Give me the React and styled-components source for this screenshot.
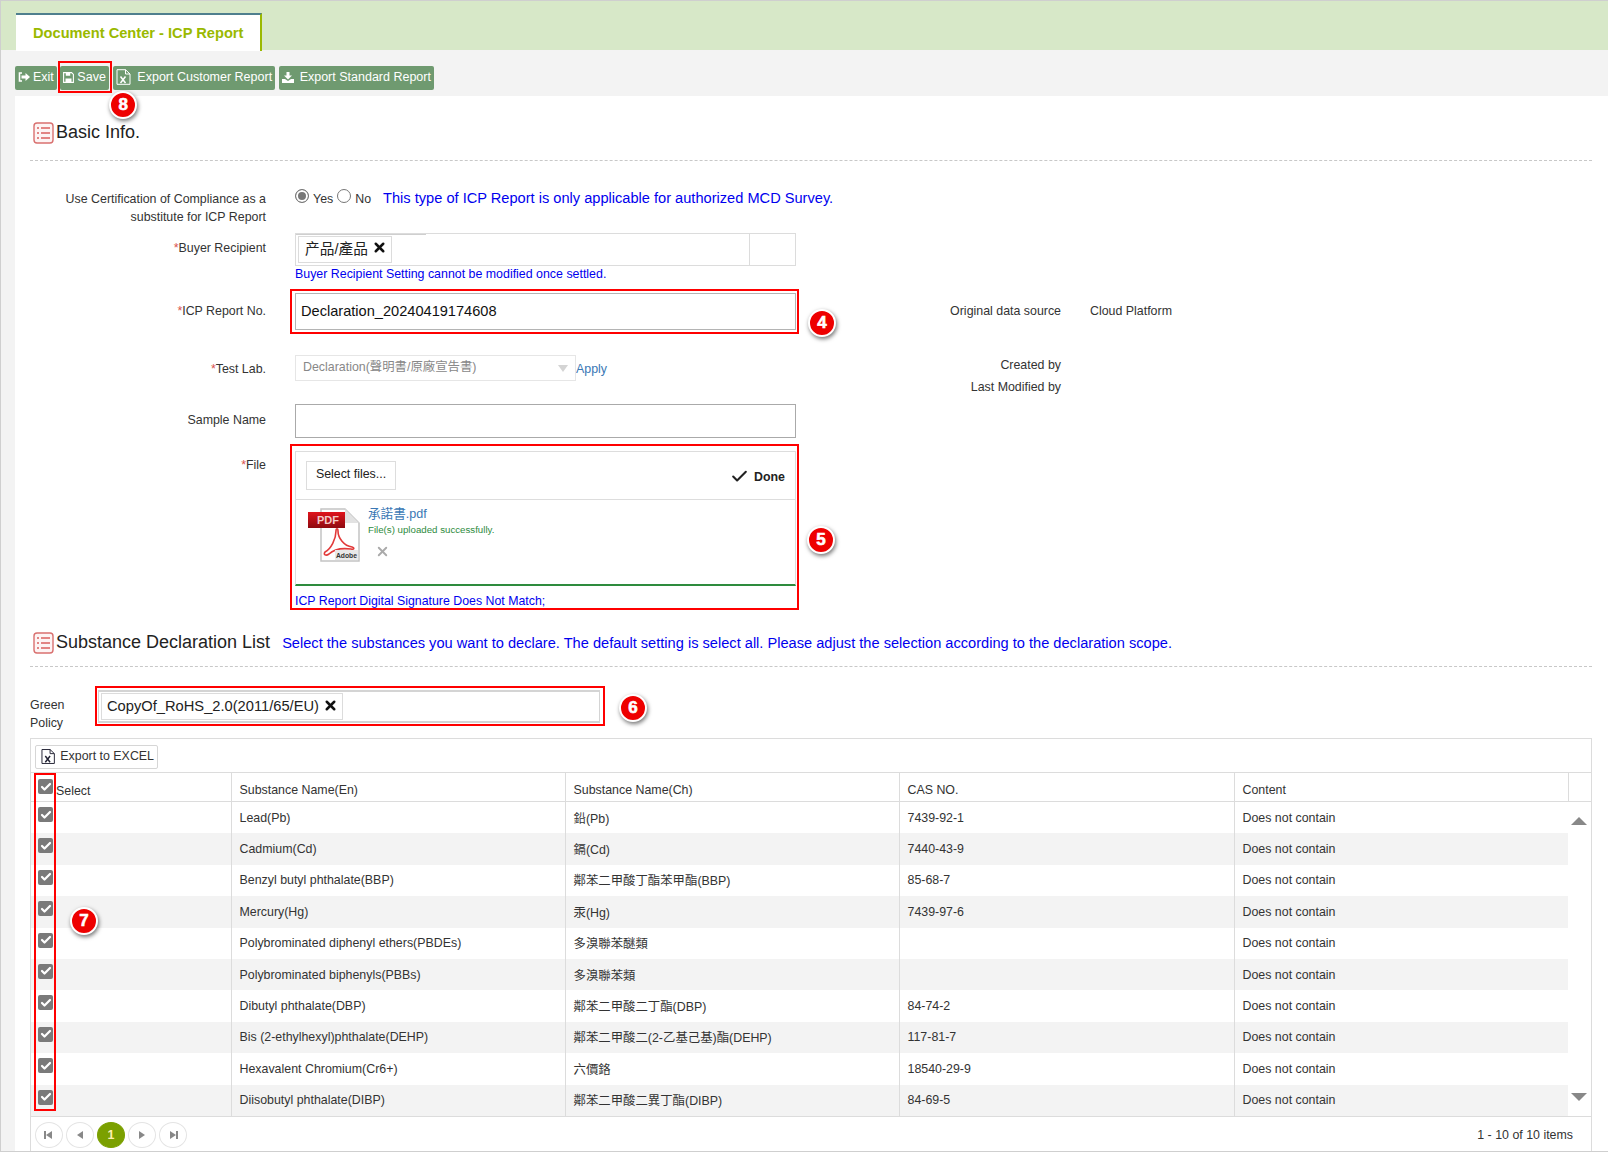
import React from "react";
import styled, { createGlobalStyle } from "styled-components";
import { Check, X } from "lucide-react";

const GlobalStyle = createGlobalStyle`
  html, body {
    margin: 0;
    padding: 0;
    background: #fff;
  }
  * {
    box-sizing: border-box;
  }
`;

const substances = [
  ["Lead(Pb)", "鉛(Pb)", "7439-92-1"],
  ["Cadmium(Cd)", "鎘(Cd)", "7440-43-9"],
  ["Benzyl butyl phthalate(BBP)", "鄰苯二甲酸丁酯苯甲酯(BBP)", "85-68-7"],
  ["Mercury(Hg)", "汞(Hg)", "7439-97-6"],
  ["Polybrominated diphenyl ethers(PBDEs)", "多溴聯苯醚類", ""],
  ["Polybrominated biphenyls(PBBs)", "多溴聯苯類", ""],
  ["Dibutyl phthalate(DBP)", "鄰苯二甲酸二丁酯(DBP)", "84-74-2"],
  ["Bis (2-ethylhexyl)phthalate(DEHP)", "鄰苯二甲酸二(2-乙基己基)酯(DEHP)", "117-81-7"],
  ["Hexavalent Chromium(Cr6+)", "六價鉻", "18540-29-9"],
  ["Diisobutyl phthalate(DIBP)", "鄰苯二甲酸二異丁酯(DIBP)", "84-69-5"],
];

function Badge({ n, $left, $top }) {
  return (
    <BadgeDot $left={$left} $top={$top}>
      {n}
    </BadgeDot>
  );
}

function ListIcon() {
  return (
    <SectionIcon viewBox="0 0 21 22">
      <rect x="1" y="1" width="19" height="20" rx="3" fill="#fdf4f4" stroke="#d9706f" strokeWidth="1.4" />
      <path d="M8 6h9M8 11h9M8 16h9M4 6h2M4 11h2M4 16h2" stroke="#d9605f" strokeWidth="1.6" fill="none" />
    </SectionIcon>
  );
}

function ExcelIcon({ color = "#fff", size = 16 }) {
  return (
    <svg width={size - 1} height={size} viewBox="0 0 15 16">
      <path d="M1 .7h8.5L14 5v10.3H1z" fill="none" stroke={color} strokeWidth="1" />
      <path d="M9.5.7V5H14" fill="none" stroke={color} strokeWidth="1" />
      <path d="M4.5 7.5l5 6.5M9.5 7.5l-5 6.5" stroke={color} strokeWidth="1.5" />
    </svg>
  );
}

function ExitIcon() {
  return (
    <svg width="12" height="10" viewBox="0 0 12 10">
      <path d="M4 1H1.5v8H4" fill="none" stroke="#fff" strokeWidth="1.6" />
      <path d="M3.5 3.5h4V1L12 5 7.5 9V6.5h-4z" fill="#fff" />
    </svg>
  );
}

function SaveIcon() {
  return (
    <svg width="11" height="11" viewBox="0 0 11 11">
      <path d="M.6.6h8l1.8 1.8v8H.6z" fill="none" stroke="#fff" strokeWidth="1.1" />
      <path d="M2.8.8h4.4v3H2.8zM2.5 6.5h6v3.8h-6z" fill="#fff" />
    </svg>
  );
}

function DownloadIcon() {
  return (
    <svg width="12" height="11" viewBox="0 0 12 11">
      <path d="M4.5 0h3v3.5H10L6 7.5 2 3.5h2.5z" fill="#fff" />
      <path d="M0 7h3l3 2 3-2h3v4H0z" fill="#fff" />
    </svg>
  );
}

function PdfIcon() {
  return (
    <svg width="54" height="55" viewBox="0 0 54 55">
      <defs>
        <linearGradient id="pdfBanner" x1="0" y1="0" x2="0" y2="1">
          <stop offset="0" stopColor="#e0141c" />
          <stop offset="1" stopColor="#8e0a10" />
        </linearGradient>
      </defs>
      <path d="M13 1h24l14 14v38H13z" fill="#fff" stroke="#c4c4c4" strokeWidth="1.5" />
      <path d="M37 1v14h14z" fill="#e2e2e2" />
      <rect x="0" y="4" width="37" height="16" fill="url(#pdfBanner)" />
      <text x="9" y="16" fontFamily="Liberation Sans, sans-serif" fontSize="11" fontWeight="700" fill="#f4c9c9">
        PDF
      </text>
      <path
        d="M17 44c6-3 11-13 11-21 0-3 2-3 2 0 0 7 6 15 14 16 3 1 2 3-1 2-8-1-17 0-22 5-3 2-6 1-4-2z"
        fill="none"
        stroke="#e23a3a"
        strokeWidth="1.6"
      />
      <rect x="27" y="42" width="23" height="10" fill="#e9e9e9" />
      <text x="28" y="50" fontFamily="Liberation Sans, sans-serif" fontSize="8" fontWeight="700" fill="#333" textLength="21" lengthAdjust="spacingAndGlyphs">
        Adobe
      </text>
    </svg>
  );
}

function Tick() {
  return (
    <CheckBox>
      <Check size={12} strokeWidth={4.5} color="#fff" />
    </CheckBox>
  );
}

function PageArrow({ dir, edge }) {
  const flip = dir === "left" ? "scale(-1,1) translate(-12,0)" : undefined;
  return (
    <svg width="12" height="12" viewBox="0 0 12 12">
      <g transform={flip}>
        <path d="M3 2l6 4-6 4z" fill="#888" />
        {edge && <rect x="9" y="2" width="2" height="8" fill="#888" />}
      </g>
    </svg>
  );
}

function App() {
  return (
    <Page>
      <GlobalStyle />
      <TabBar>
        <Tab>Document Center - ICP Report</Tab>
      </TabBar>
      <Toolbar>
        <ToolButton $gap="3px">
          <ExitIcon /> Exit
        </ToolButton>
        <Marked $inset="-5px -3px -3px -2px">
          <ToolButton $gap="3px">
            <SaveIcon /> Save
          </ToolButton>
          <Badge n="8" $left="49px" $top="25px" />
        </Marked>
        <ToolButton $gap="6px" $ml="1px">
          <ExcelIcon /> Export Customer Report
        </ToolButton>
        <ToolButton $gap="6px">
          <DownloadIcon /> Export Standard Report
        </ToolButton>
      </Toolbar>
      <Content>
        <SectionHead $height="65px" $pad="26px">
          <ListIcon />
          <SectionTitle>Basic Info.</SectionTitle>
        </SectionHead>

        <FormRow $mt="29px" $height="35px">
          <FieldLabel>
            Use Certification of Compliance as a
            <br />
            substitute for ICP Report
          </FieldLabel>
          <RadioLine>
            <Radio $checked />
            <RadioText>Yes</RadioText>
            <Radio />
            <RadioText>No</RadioText>
            <BlueHint>This type of ICP Report is only applicable for authorized MCD Survey.</BlueHint>
          </RadioLine>
        </FormRow>

        <FormRow $mt="8px" $height="33px">
          <FieldLabel $pt="6px">
            <Star>*</Star>Buyer Recipient
          </FieldLabel>
          <BuyerBox>
            <MultiSelect>
              <Chip $lift="5px">
                产品/產品 <X size={15} strokeWidth={4} color="#111" />
              </Chip>
            </MultiSelect>
            <BuyerEnd />
          </BuyerBox>
        </FormRow>
        <FormRow $height="15px">
          <span />
          <SmallNote $mt="1px">Buyer Recipient Setting cannot be modified once settled.</SmallNote>
        </FormRow>

        <FormRow $mt="12px" $height="37px">
          <FieldLabel $pt="9px">
            <Star>*</Star>ICP Report No.
          </FieldLabel>
          <Marked $inset="-4px -3px -4px -5px">
            <TextInput>Declaration_20240419174608</TextInput>
            <Badge n="4" $left="513px" $top="16px" />
          </Marked>
          <FieldLabel $pt="9px">Original data source</FieldLabel>
          <InfoValue>Cloud Platform</InfoValue>
        </FormRow>

        <FormRow $mt="25px" $height="24px">
          <FieldLabel $pt="5px">
            <Star>*</Star>Test Lab.
          </FieldLabel>
          <SelectLine>
            <DisabledSelect>
              Declaration(聲明書/原廠宣告書)
              <SelectArrow />
            </DisabledSelect>
            <ApplyLink>Apply</ApplyLink>
          </SelectLine>
          <InfoStack>
            Created by
            <br />
            Last Modified by
          </InfoStack>
        </FormRow>

        <FormRow $mt="25px" $height="34px">
          <FieldLabel $pt="7px">Sample Name</FieldLabel>
          <EmptyInput />
        </FormRow>

        <FormRow $mt="13px" $height="157px">
          <FieldLabel $pt="5px">
            <Star>*</Star>File
          </FieldLabel>
          <Marked $inset="-7px -3px -2px -5px">
            <UploadBox>
              <UploadHead>
                <SelectFiles>Select files...</SelectFiles>
                <DoneMark>
                  <Check size={19} strokeWidth={2.6} color="#222" /> Done
                </DoneMark>
              </UploadHead>
              <UploadFile>
                <PdfIcon />
                <FileMeta>
                  <FileName>承諾書.pdf</FileName>
                  <FileOk>File(s) uploaded successfully.</FileOk>
                  <FileRemove>
                    <X size={15} strokeWidth={3} color="#aaa" />
                  </FileRemove>
                </FileMeta>
              </UploadFile>
            </UploadBox>
            <SignatureNote>ICP Report Digital Signature Does Not Match;</SignatureNote>
            <Badge n="5" $left="512px" $top="75px" />
          </Marked>
        </FormRow>

        <SectionHead $height="60px" $pad="25px" $mt="-1px">
          <ListIcon />
          <SectionTitle>Substance Declaration List</SectionTitle>
          <BlueHint $ml="10px">
            Select the substances you want to declare. The default setting is select all. Please adjust the selection
            according to the declaration scope.
          </BlueHint>
        </SectionHead>

        <PolicyRow>
          <PolicyLabel>
            Green
            <br />
            Policy
          </PolicyLabel>
          <Marked $inset="-4px -5px -3px -3px">
            <PolicyBox>
              <Chip $pad="0 4px 0 5px" $lift="2px">
                CopyOf_RoHS_2.0(2011/65/EU) <X size={15} strokeWidth={4} color="#111" />
              </Chip>
            </PolicyBox>
            <Badge n="6" $left="521px" $top="4px" />
          </Marked>
        </PolicyRow>

        <Grid>
          <GridToolbar>
            <ExportButton>
              <ExcelIcon color="#223" size={17} /> Export to EXCEL
            </ExportButton>
          </GridToolbar>
          <HeadRow>
            <HeadCell $select>
              <Tick />
              <SelectWord>Select</SelectWord>
            </HeadCell>
            <HeadCell>Substance Name(En)</HeadCell>
            <HeadCell>Substance Name(Ch)</HeadCell>
            <HeadCell>CAS NO.</HeadCell>
            <HeadCell>Content</HeadCell>
            <span />
          </HeadRow>
          <GridBody>
            <Rows>
              {substances.map((s) => (
                <Row key={s[0]}>
                  <TickCell>
                    <Tick />
                  </TickCell>
                  <Cell>{s[0]}</Cell>
                  <Cell>{s[1]}</Cell>
                  <Cell>{s[2]}</Cell>
                  <Cell $line>Does not contain</Cell>
                </Row>
              ))}
              <SelectFrame />
              <Badge n="7" $left="39px" $top="105px" />
            </Rows>
            <ScrollArrows>
              <ArrowUp />
              <ArrowDown />
            </ScrollArrows>
          </GridBody>
          <Pager>
            <PagerButtons>
              <PageCircle>
                <PageArrow dir="left" edge />
              </PageCircle>
              <PageCircle>
                <PageArrow dir="left" />
              </PageCircle>
              <PageCurrent>1</PageCurrent>
              <PageCircle>
                <PageArrow dir="right" />
              </PageCircle>
              <PageCircle>
                <PageArrow dir="right" edge />
              </PageCircle>
            </PagerButtons>
            <PagerInfo>1 - 10 of 10 items</PagerInfo>
          </Pager>
        </Grid>
      </Content>
    </Page>
  );
}

const Page = styled.div`
  width: 1608px;
  height: 1152px;
  overflow: hidden;
  display: flex;
  flex-direction: column;
  background: #f3f3f3;
  border-top: 1px solid #cfcfcf;
  border-left: 1px solid #cfcfcf;
  border-bottom: 1px solid #cfcfcf;
  font-family: "Liberation Sans", "Noto Sans CJK TC", sans-serif;
  font-size: 12.4px;
  color: #333;
`;

const TabBar = styled.div`
  flex: none;
  height: 49px;
  padding: 12px 0 0 15px;
  background: #d7e8c8;
`;

const Tab = styled.div`
  width: 246px;
  height: 38px;
  margin-bottom: -1px;
  padding: 10px 0 0 17px;
  background: #fff;
  border-top: 2px solid #4f7f8e;
  border-right: 2px solid #9ab900;
  color: #9ab900;
  font-size: 14.65px;
  font-weight: 700;
`;

const Toolbar = styled.div`
  flex: none;
  height: 46px;
  padding: 16px 0 0 14px;
  display: flex;
  align-items: flex-start;
  gap: 3.5px;
`;

const ToolButton = styled.div`
  height: 24px;
  margin-left: ${(p) => p.$ml || 0};
  padding: 0 3px 2px;
  display: flex;
  align-items: center;
  gap: ${(p) => p.$gap};
  background: #6f9a70;
  border-radius: 2px;
  color: #fff;
  font-size: 12.5px;
  white-space: nowrap;
`;

const Marked = styled.div`
  position: relative;
  &::after {
    content: "";
    position: absolute;
    inset: ${(p) => p.$inset};
    border: 2px solid #f00;
    pointer-events: none;
  }
`;

const BadgeDot = styled.div`
  position: absolute;
  left: ${(p) => p.$left};
  top: ${(p) => p.$top};
  z-index: 2;
  width: 28px;
  height: 28px;
  display: flex;
  align-items: center;
  justify-content: center;
  border: 2px solid #fff;
  border-radius: 50%;
  background: #ee0000;
  box-shadow: 1px 2px 4px rgba(0, 0, 0, 0.55);
  color: #fff;
  font-size: 17px;
  font-weight: 700;
  -webkit-text-stroke: 0.6px #fff;
`;

const Content = styled.div`
  flex: 1;
  margin-left: 14px;
  padding: 0 16px 0 15px;
  background: #fff;
`;

const SectionHead = styled.div`
  height: ${(p) => p.$height};
  margin-top: ${(p) => p.$mt || 0};
  padding: ${(p) => p.$pad} 0 0 3px;
  display: flex;
  align-items: flex-start;
  gap: 2px;
  border-bottom: 1px dashed #c8c8c8;
`;

const SectionIcon = styled.svg`
  flex: none;
  width: 21px;
  height: 22px;
`;

const SectionTitle = styled.div`
  font-size: 18px;
  line-height: 20px;
  color: #222;
`;

const FormRow = styled.div`
  height: ${(p) => p.$height};
  margin-top: ${(p) => p.$mt || 0};
  display: grid;
  grid-template-columns: 236px 501px 236px 1fr;
  column-gap: 29px;
  align-items: start;
`;

const FieldLabel = styled.div`
  padding-top: ${(p) => p.$pt || 0};
  text-align: right;
  line-height: 18px;
`;

const Star = styled.span`
  color: #d9534f;
`;

const RadioLine = styled.div`
  grid-column: 2 / 5;
  display: flex;
  align-items: flex-start;
  white-space: nowrap;
`;

const Radio = styled.span`
  flex: none;
  width: 14px;
  height: 14px;
  margin-top: -1px;
  border: 1px solid #777;
  border-radius: 50%;
  background: ${(p) => (p.$checked ? "#777" : "#fff")};
  box-shadow: inset 0 0 0 2px #fff;
`;

const RadioText = styled.span`
  margin: 2px 4px 0 4px;
  line-height: 14px;
`;

const BlueHint = styled.span`
  margin-left: ${(p) => p.$ml || "8px"};
  margin-top: ${(p) => (p.$ml ? "2px" : "-1px")};
  color: #0000ee;
  font-size: 14.62px;
  line-height: 18px;
  white-space: nowrap;
`;

const BuyerBox = styled.div`
  height: 33px;
  display: flex;
`;

const MultiSelect = styled.div`
  position: relative;
  flex: 1;
  padding: 2px;
  border: 1px solid #dcdcdc;
  &::before {
    content: "";
    position: absolute;
    left: 0;
    top: 0;
    width: 130px;
    height: 1px;
    background: #cfcfcf;
  }
`;

const BuyerEnd = styled.div`
  flex: none;
  width: 46px;
  border: 1px solid #dcdcdc;
  border-left: 0;
`;

const Chip = styled.div`
  height: 27px;
  width: fit-content;
  padding: ${(p) => p.$pad || "0 4px 0 6px"};
  padding-bottom: ${(p) => p.$lift};
  display: flex;
  align-items: center;
  gap: 4px;
  border: 1px solid #dcdcdc;
  color: #222;
  font-size: 14.7px;
  white-space: nowrap;
`;

const SmallNote = styled.div`
  margin-top: ${(p) => p.$mt || 0};
  color: #0000ee;
  font-size: 12.4px;
  line-height: 15px;
`;

const TextInput = styled.div`
  height: 37px;
  padding: 0 5px 2px;
  display: flex;
  align-items: center;
  border: 1px solid #b4b4b4;
  color: #111;
  font-size: 14.6px;
`;

const InfoValue = styled.div`
  padding-top: 9px;
  line-height: 18px;
`;

const InfoStack = styled.div`
  grid-column: 3;
  margin-top: -1px;
  text-align: right;
  line-height: 22px;
`;

const SelectLine = styled.div`
  display: flex;
  align-items: flex-start;
`;

const DisabledSelect = styled.div`
  position: relative;
  width: 281px;
  height: 26px;
  padding: 1px 7px;
  border: 1px solid #e6e6e6;
  color: #888;
`;

const SelectArrow = styled.span`
  position: absolute;
  right: 7px;
  top: 9px;
  border-left: 5px solid transparent;
  border-right: 5px solid transparent;
  border-top: 7px solid #d4d4d4;
`;

const ApplyLink = styled.span`
  padding-top: 7px;
  color: #3a78b5;
`;

const EmptyInput = styled.div`
  height: 34px;
  border: 1px solid #aaa;
`;

const UploadBox = styled.div`
  height: 135px;
  border: 1px solid #ddd;
  border-bottom: 2px solid #2e8b3d;
`;

const UploadHead = styled.div`
  height: 48px;
  padding: 9px 10px 0 10px;
  display: flex;
  justify-content: space-between;
  border-bottom: 1px solid #ddd;
`;

const SelectFiles = styled.div`
  width: 90px;
  height: 29px;
  padding-bottom: 3px;
  display: flex;
  align-items: center;
  justify-content: center;
  border: 1px solid #ddd;
  color: #222;
`;

const DoneMark = styled.div`
  display: flex;
  align-items: center;
  gap: 5px;
  height: 29px;
  margin-top: 1px;
  font-weight: 700;
  color: #222;
`;

const UploadFile = styled.div`
  padding: 8px 0 0 12px;
  display: flex;
  gap: 6px;
`;

const FileMeta = styled.div`
  display: flex;
  flex-direction: column;
  align-items: flex-start;
`;

const FileName = styled.div`
  margin-top: -1px;
  color: #3a78b5;
  font-size: 12.6px;
  line-height: 15px;
`;

const FileOk = styled.div`
  margin-top: 1px;
  color: #2e8b3d;
  font-size: 9.7px;
  line-height: 13px;
`;

const FileRemove = styled.div`
  margin: 8px 0 0 7px;
  line-height: 0;
`;

const SignatureNote = styled.div`
  margin-top: 8px;
  color: #0000ee;
  font-size: 12.35px;
  line-height: 14px;
`;

const PolicyRow = styled.div`
  margin-top: 23px;
  height: 48px;
  display: grid;
  grid-template-columns: 68px 502px;
  align-items: start;
`;

const PolicyLabel = styled.div`
  padding-top: 6px;
  line-height: 18px;
`;

const PolicyBox = styled.div`
  height: 33px;
  padding: 1px 2px;
  border: 1px solid #d4d4d4;
  border-top-width: 2px;
  border-bottom-width: 2px;
`;

const Grid = styled.div`
  height: 413px;
  border: 1px solid #dcdcdc;
  border-bottom: 0;
`;

const GridToolbar = styled.div`
  height: 33px;
  padding: 6px 0 0 4px;
`;

const ExportButton = styled.div`
  width: 123px;
  height: 24px;
  padding: 0 3px 2px 5px;
  display: flex;
  align-items: center;
  gap: 5px;
  border: 1px solid #d6d6d6;
  border-radius: 2px;
  white-space: nowrap;
`;

const HeadRow = styled.div`
  height: 30px;
  display: grid;
  grid-template-columns: 200.5px 334px 334px 335px 334px 1fr;
  border-top: 1px solid #dcdcdc;
  border-bottom: 1px solid #dcdcdc;
`;

const HeadCell = styled.div`
  position: relative;
  padding: ${(p) => (p.$select ? "6px 0 0 7px" : "8px 0 0 8px")};
  border-right: 1px solid #dcdcdc;
  line-height: 18px;
`;

const SelectWord = styled.span`
  position: absolute;
  left: 25px;
  top: 9px;
`;

const GridBody = styled.div`
  height: 314px;
  display: flex;
`;

const Rows = styled.div`
  position: relative;
  width: 1537px;
`;

const Row = styled.div`
  height: 31.4px;
  display: grid;
  grid-template-columns: 200.5px 334px 334px 335px 1fr;
  &:nth-child(even) {
    background: #f3f3f3;
  }
`;

const Cell = styled.div`
  display: flex;
  align-items: center;
  padding-left: 8px;
  border-right: 1px solid #dcdcdc;
  &:last-child {
    border-right: 0;
  }
`;

const TickCell = styled.div`
  padding: 5px 0 0 7px;
  border-right: 1px solid #dcdcdc;
`;

const CheckBox = styled.span`
  width: 15px;
  height: 15px;
  display: flex;
  align-items: center;
  justify-content: center;
  border-radius: 2px;
  background: #7a7a7a;
`;

const SelectFrame = styled.div`
  position: absolute;
  left: 3px;
  top: -29px;
  width: 22px;
  height: 338px;
  border: 2px solid #f00;
`;

const ScrollArrows = styled.div`
  flex: 1;
  padding: 15px 4px 15px 3px;
  display: flex;
  flex-direction: column;
  justify-content: space-between;
`;

const ArrowUp = styled.span`
  width: 0;
  border-left: 8px solid transparent;
  border-right: 8px solid transparent;
  border-bottom: 8px solid #888;
`;

const ArrowDown = styled.span`
  width: 0;
  border-left: 8px solid transparent;
  border-right: 8px solid transparent;
  border-top: 8px solid #888;
`;

const Pager = styled.div`
  height: 36px;
  padding: 0 18px 0 4px;
  display: flex;
  align-items: center;
  justify-content: space-between;
  border-top: 1px solid #dcdcdc;
`;

const PagerButtons = styled.div`
  display: flex;
  gap: 3px;
`;

const PageCircle = styled.span`
  width: 28px;
  height: 26px;
  display: flex;
  align-items: center;
  justify-content: center;
  border: 1px solid #e4e4e4;
  border-radius: 50%;
`;

const PageCurrent = styled(PageCircle)`
  border-color: #7ba000;
  background: #7ba000;
  color: #fff0b0;
  font-weight: 700;
`;

const PagerInfo = styled.span`
  color: #333;
`;

export default App;
